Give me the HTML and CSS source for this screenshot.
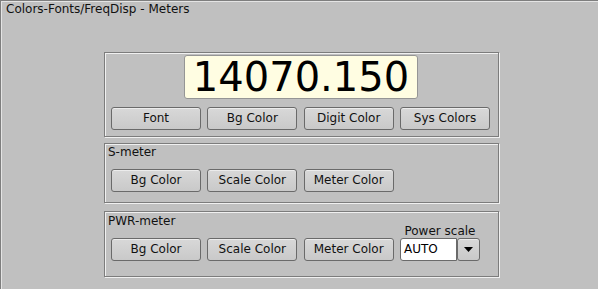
FILE: index.html
```html
<!DOCTYPE html>
<html>
<head>
<meta charset="utf-8">
<link rel="stylesheet" href="styles.css">
</head>
<body>
<div class="window">
  <div class="title">Colors-Fonts/FreqDisp - Meters</div>
  <div class="groups">
    <section class="group g-freq">
      <div class="freq">14070.150</div>
      <div class="row">
        <button class="btn">Font</button>
        <button class="btn">Bg Color</button>
        <button class="btn">Digit Color</button>
        <button class="btn">Sys Colors</button>
      </div>
    </section>
    <section class="group g-s">
      <div class="glabel">S-meter</div>
      <div class="row">
        <button class="btn">Bg Color</button>
        <button class="btn">Scale Color</button>
        <button class="btn">Meter Color</button>
      </div>
    </section>
    <section class="group g-pwr">
      <div class="glabel">PWR-meter</div>
      <div class="row row-end">
        <button class="btn">Bg Color</button>
        <button class="btn">Scale Color</button>
        <button class="btn">Meter Color</button>
        <div class="choice-wrap">
          <div class="clabel">Power scale</div>
          <div class="choice">
            <div class="cinput">AUTO</div>
            <div class="cbtn">
              <svg width="9" height="5" viewBox="0 0 9 5"><polygon points="0,0 9,0 4.5,5" fill="#000"/></svg>
            </div>
          </div>
        </div>
      </div>
    </section>
  </div>
</div>
</body>
</html>
```
FILE: styles.css
```css
html, body {
  margin: 0;
  padding: 0;
  background: #c0c0c0;
}
body {
  font-family: "DejaVu Sans", "Liberation Sans", sans-serif;
  font-size: 12px;
  color: #000;
}
.window {
  box-sizing: border-box;
  width: 598px;
  height: 289px;
  border-top: 1px solid #7e7e7e;
  border-left: 1px solid #7e7e7e;
  box-shadow: inset 1px 1px 0 #e4e4e4;
  overflow: hidden;
}
.title {
  margin-top: 1px;
  padding-left: 5px;
  line-height: 14px;
  height: 14px;
  color: #111;
}
.groups {
  margin-top: 36px;
  margin-left: 103px;
  width: 395px;
  display: flex;
  flex-direction: column;
}
.group {
  box-sizing: border-box;
  width: 395px;
  border: 1px solid #7c7c7c;
  box-shadow: inset 1px 1px 0 #f0f0f0, 1px 1px 0 #f0f0f0;
  padding: 1px 0 0 6px;
}
.g-freq {
  height: 85px;
  padding-top: 2px;
}
.g-s {
  margin-top: 6px;
  height: 60px;
}
.g-pwr {
  margin-top: 8px;
  height: 66px;
  padding-top: 2px;
}
.freq {
  box-sizing: border-box;
  width: 234px;
  height: 44px;
  margin-left: 73px;
  border: 1px solid #959595;
  border-radius: 3px;
  background: #fffde2;
  font-size: 40px;
  line-height: 42px;
  text-align: center;
  color: #000;
}
.g-freq .row {
  margin-top: 8px;
}
.glabel {
  line-height: 14px;
  height: 14px;
  margin-left: -3px;
  color: #111;
}
.g-s .row {
  margin-top: 10px;
}
.g-pwr .row {
  margin-top: -4px;
}
.row {
  display: flex;
  gap: 6.33px;
}
.row-end {
  align-items: flex-end;
}
.btn {
  box-sizing: border-box;
  width: 90px;
  height: 23px;
  margin: 0;
  padding: 0;
  border: 1px solid #6a6a6a;
  border-radius: 3px;
  background: linear-gradient(#d8d8d8, #c9c9c9);
  box-shadow: inset 0 1px 0 #ececec;
  font-family: "DejaVu Sans", "Liberation Sans", sans-serif;
  font-size: 12px;
  color: #111;
  line-height: 21px;
  text-align: center;
}
.choice-wrap {
  width: 80px;
  display: flex;
  flex-direction: column;
  align-items: center;
}
.clabel {
  line-height: 14px;
  height: 14px;
  color: #111;
}
.choice {
  display: flex;
  width: 80px;
  height: 23px;
}
.cinput {
  box-sizing: border-box;
  width: 57px;
  height: 23px;
  border: 1px solid #6a6a6a;
  border-radius: 3px 0 0 3px;
  background: #fff;
  padding-left: 3px;
  line-height: 21px;
  color: #000;
}
.cbtn {
  box-sizing: border-box;
  width: 23px;
  height: 23px;
  border: 1px solid #6a6a6a;
  border-radius: 3px;
  background: linear-gradient(#d8d8d8, #c9c9c9);
  box-shadow: inset 0 1px 0 #ececec;
  display: flex;
  align-items: center;
  justify-content: center;
}
.cbtn svg {
  display: block;
}
```
